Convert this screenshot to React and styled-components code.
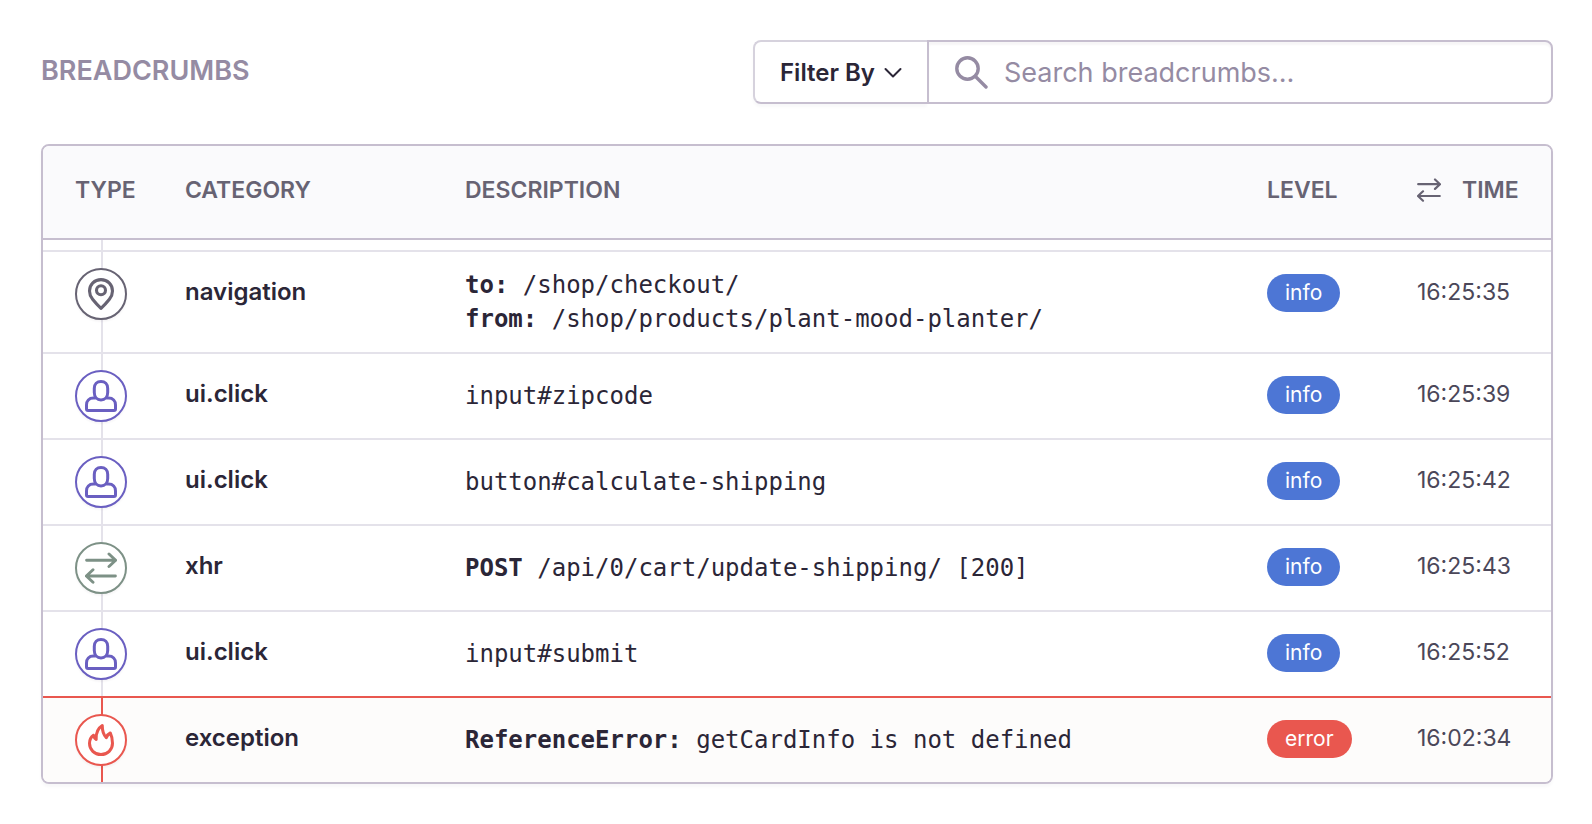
import { useState } from "react"
import styled, { createGlobalStyle } from "styled-components"

const GlobalStyle = createGlobalStyle`
  * {
    box-sizing: border-box;
  }

  body {
    margin: 0;
    background: #ffffff;
    color: #2b2637;
    font-family: Inter, "Liberation Sans", sans-serif;
  }
`;

const Page = styled.main`
  padding: 40px 39px 40px 41px;
`;

const Toolbar = styled.div`
  display: flex;
  align-items: center;
  justify-content: space-between;
  gap: 40px;
  margin-bottom: 40px;
`;

const Title = styled.h1`
  margin: 0;
  padding-bottom: 2px;
  color: #958ba3;
  font-size: 27px;
  font-weight: 600;
  line-height: 32px;
  text-transform: uppercase;
`;

const Controls = styled.div`
  display: flex;
  flex: 0 1 800px;
  height: 64px;
`;

const FilterButton = styled.button`
  display: flex;
  align-items: center;
  gap: 9px;
  padding: 1px 25px 0;
  border: 2px solid #d6d2dd;
  border-right: 0;
  border-bottom-color: #c6becf;
  border-radius: 8px 0 0 8px;
  background: #ffffff;
  box-shadow: 0 3px 3px rgba(43, 34, 51, 0.03);
  color: #2b2637;
  font-family: inherit;
  font-size: 24px;
  font-weight: 600;
  line-height: 32px;
  white-space: nowrap;
  cursor: pointer;
`;

const SearchBox = styled.label`
  display: flex;
  flex: 1;
  align-items: center;
  gap: 16px;
  min-width: 0;
  padding: 0 24px 0 25px;
  border: 2px solid #c6becf;
  border-radius: 0 8px 8px 0;
  box-shadow: inset 0 3px 2px rgba(43, 34, 51, 0.04);
  color: #958ba3;
`;

const SearchInput = styled.input`
  flex: 1;
  min-width: 0;
  padding: 2px 0 0;
  border: 0;
  outline: 0;
  background: transparent;
  color: #2b2637;
  font-family: inherit;
  font-size: 27px;
  line-height: 40px;

  &::placeholder {
    color: #958ba3;
    opacity: 1;
  }
`;

const Icon = styled.svg`
  display: block;
  flex: none;
  width: ${(props) => props.$width}px;
  height: ${(props) => props.$height || props.$width}px;
  fill: none;
  stroke: currentColor;
  stroke-linecap: round;
  stroke-linejoin: round;
`;

const Panel = styled.section`
  overflow: hidden;
  border: 2px solid #c6becf;
  border-radius: 8px;
  box-shadow: 0 3px 3px rgba(43, 34, 51, 0.03);
`;

const Table = styled.table`
  width: 100%;
  table-layout: fixed;
  border-collapse: separate;
  border-spacing: 0;
`;

const Col = styled.col`
  width: ${(props) => props.$width};
`;

const HeadCell = styled.th`
  padding: 28px 0 32px 32px;
  border-bottom: 2px solid #c6becf;
  background: #fafafc;
  color: #676373;
  font-size: 23px;
  font-weight: 600;
  line-height: 32px;
  text-align: left;
  text-transform: uppercase;
`;

const TimeHead = styled.div`
  display: flex;
  align-items: center;
  gap: 21px;
`;

const SwitchButton = styled.button`
  padding: 0;
  border: 0;
  background: none;
  color: #676373;
  cursor: pointer;
`;

const Row = styled.tr`
  background: ${(props) => (props.$error ? "#fdfcfb" : "#ffffff")};
`;

const Cell = styled.td`
  padding: 16px 0 0 32px;
  border-bottom: ${(props) => (props.$last ? "0" : "2px")} solid ${(props) => (props.$beforeError ? "#e9574f" : "#e4e2ea")};
  vertical-align: top;
`;

// the vertical rail that links the icons of the timeline
const TypeCell = styled(Cell)`
  padding-bottom: 16px;
  background: linear-gradient(${(props) => (props.$error ? "#e9574f, #e9574f" : "#e4e2ea, #e4e2ea")}) 58px 0 / 2px 100% no-repeat;
`;

// bottom of the row that is scrolled under the header
const ScrolledCell = styled(TypeCell)`
  height: 12px;
  padding: 0;
`;

const Badge = styled.span`
  display: flex;
  align-items: center;
  justify-content: center;
  width: 52px;
  height: 52px;
  border: 2px solid currentColor;
  border-radius: 50%;
  background: #ffffff;
  box-shadow: 0 2px 2px rgba(43, 34, 51, 0.04);
  color: ${(props) => props.$color};
`;

const CategoryCell = styled(Cell)`
  font-size: 24px;
  font-weight: 600;
  line-height: 48px;
`;

const DescriptionCell = styled(Cell)`
  padding-bottom: 16px;
  font-family: "DejaVu Sans Mono", monospace;
  font-size: 24px;
  line-height: 34px;
  vertical-align: middle;
  overflow-wrap: anywhere;
`;

const LevelCell = styled(Cell)`
  padding-top: 22px;
`;

const Level = styled.span`
  display: inline-block;
  padding: 0 18px;
  border-radius: 19px;
  background: ${(props) => (props.$error ? "#e9574f" : "#4d76d5")};
  color: #ffffff;
  font-size: 21px;
  line-height: 38px;
  vertical-align: top;
`;

const TimeCell = styled(Cell)`
  color: #4b4759;
  font-size: 23px;
  line-height: 48px;
`;

function SwitchIcon({ size }){
    return(
        <Icon viewBox="0 0 24 24" $width={size} strokeWidth="2.2" aria-hidden="true">
            <path d="M1.200 6.200h21.600M18 1.500l5 4.700-5 4.700M22.800 18H1.200M6 13.300L1 18l5 4.700" />
        </Icon>
    )
}

function PinIcon(){
    return(
        <Icon viewBox="0 0 32 32" $width={32} strokeWidth="3.1" aria-hidden="true">
            <path d="M16 30.400C13.500 28 10.500 25 7.600 21.300C5.500 18.600 4.500 16 4.500 13C4.500 6.300 9.500 1.600 16 1.600S27.500 6.300 27.500 13C27.500 16 26.500 18.600 24.400 21.300C21.500 25 18.500 28 16 30.400Z" />
            <circle cx="16" cy="12.300" r="4.500" />
        </Icon>
    )
}

function UserIcon(){
    return(
        <Icon viewBox="0 0 32 32" $width={32} strokeWidth="3" aria-hidden="true">
            <path d="M16 1.500C12 1.500 9.300 4.200 9.300 8.300V12.500C9.300 16.800 12 19.900 16 19.900S22.700 16.800 22.700 12.500V8.300C22.700 4.200 20 1.500 16 1.500Z" />
            <path d="M10 18H8.500C4 18 1.500 20.800 1.500 25V29C1.500 30 2 30.500 3 30.500H29C30 30.500 30.500 30 30.500 29V25C30.500 20.800 28 18 23.500 18H22" />
        </Icon>
    )
}

function FireIcon(){
    return(
        <Icon viewBox="0 0 32 32" $width={32} strokeWidth="3" aria-hidden="true">
            <path d="M17.300 1.500C13.300 4 10.900 8.500 11.200 15.500C9.700 14.600 8.900 13.200 8.500 11.300C5.900 13.200 4.500 16 4.500 19.300C4.500 25.700 9.500 30.500 16 30.500S27.500 25.700 27.500 19.300C27.500 15.300 26.700 11.800 25.300 9C23.900 9.600 22.200 11.300 21.300 13.700C18 10.500 17.200 6.500 17.300 1.500Z" />
        </Icon>
    )
}

const types = {
    navigation: { icon: <PinIcon />, color: "#676373" },
    user: { icon: <UserIcon />, color: "#6a5fc1" },
    xhr: { icon: <SwitchIcon size={32} />, color: "#7d9186" },
    error: { icon: <FireIcon />, color: "#e9574f" },
}

const breadcrumbs = [
    { type: "navigation", category: "navigation", lines: [["to:", "/shop/checkout/"], ["from:", "/shop/products/plant-mood-planter/"]], level: "info", time: "16:25:35" },
    { type: "user", category: "ui.click", lines: [["", "input#zipcode"]], level: "info", time: "16:25:39" },
    { type: "user", category: "ui.click", lines: [["", "button#calculate-shipping"]], level: "info", time: "16:25:42" },
    { type: "xhr", category: "xhr", lines: [["POST", "/api/0/cart/update-shipping/ [200]"]], level: "info", time: "16:25:43" },
    { type: "user", category: "ui.click", lines: [["", "input#submit"]], level: "info", time: "16:25:52" },
    { type: "error", category: "exception", lines: [["ReferenceError:", "getCardInfo is not defined"]], level: "error", time: "16:02:34" },
]

function Breadcrumb({ item, last, beforeError }){
    const error = item.level === "error"
    const edge = { $last: last, $beforeError: beforeError }

    return(
        <Row $error={error}>
            <TypeCell {...edge} $error={error}>
                <Badge $color={types[item.type].color}>{types[item.type].icon}</Badge>
            </TypeCell>
            <CategoryCell {...edge}>{item.category}</CategoryCell>
            <DescriptionCell {...edge}>
                {item.lines.map(([label, text])=>(
                    <div key={text}>{label && <b>{label}</b>}{label && " "}{text}</div>
                ))}
            </DescriptionCell>
            <LevelCell {...edge}><Level $error={error}>{item.level}</Level></LevelCell>
            <TimeCell {...edge}>{item.time}</TimeCell>
        </Row>
    )
}

export default function App(){

    const [ search, setSearch ] = useState("")

    const items = breadcrumbs.filter((item)=>{
        return JSON.stringify(item).toLowerCase().includes(search.toLowerCase())
    })

    return(
        <>
            <GlobalStyle />
            <Page>
                <Toolbar>
                    <Title>Breadcrumbs</Title>
                    <Controls>
                        <FilterButton type="button">
                            Filter By
                            <Icon viewBox="0 0 18 12" $width={18} $height={12} strokeWidth="2" aria-hidden="true">
                                <path d="M1.500 2l7.500 7.500L16.500 2" />
                            </Icon>
                        </FilterButton>
                        <SearchBox>
                            <Icon viewBox="0 0 34 34" $width={34} strokeWidth="3.4" aria-hidden="true">
                                <circle cx="13.500" cy="13.500" r="10.700" />
                                <path d="M21.500 21.500l10.500 10.500" />
                            </Icon>
                            <SearchInput
                                type="text"
                                aria-label="Search breadcrumbs"
                                placeholder="Search breadcrumbs…"
                                value={search}
                                onChange={(e)=>setSearch(e.target.value)}
                            />
                        </SearchBox>
                    </Controls>
                </Toolbar>
                <Panel>
                    <Table>
                        <colgroup>
                            <Col $width="110px" />
                            <Col $width="280px" />
                            <Col $width="auto" />
                            <Col $width="150px" />
                            <Col $width="166px" />
                        </colgroup>
                        <thead>
                            <tr>
                                <HeadCell>Type</HeadCell>
                                <HeadCell>Category</HeadCell>
                                <HeadCell>Description</HeadCell>
                                <HeadCell>Level</HeadCell>
                                <HeadCell>
                                    <TimeHead>
                                        <SwitchButton type="button" aria-label="Switch time format">
                                            <SwitchIcon size={24} />
                                        </SwitchButton>
                                        Time
                                    </TimeHead>
                                </HeadCell>
                            </tr>
                        </thead>
                        <tbody>
                            <tr aria-hidden="true"><ScrolledCell colSpan="5" /></tr>
                            {items.map((item, i)=>(
                                <Breadcrumb
                                    key={item.time}
                                    item={item}
                                    last={i === items.length - 1}
                                    beforeError={items[i + 1]?.level === "error"}
                                />
                            ))}
                        </tbody>
                    </Table>
                </Panel>
            </Page>
        </>
    )
}
